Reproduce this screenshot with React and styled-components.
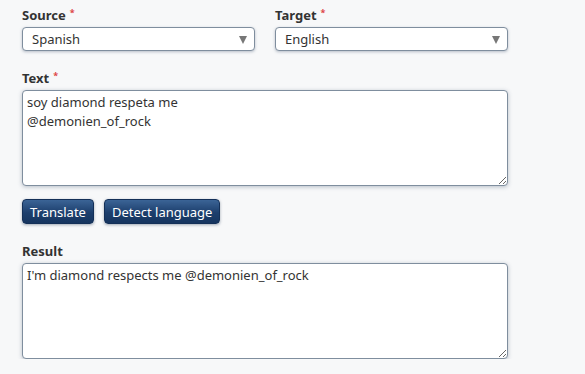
import React, {useState} from "react";
import styled, {createGlobalStyle} from "styled-components";

const Global = createGlobalStyle`
body {
    margin: 0;
    background: #f7f8f9;
    font-family: "Noto Sans", "Open Sans", sans-serif;
}
`;

const Page = styled.div`
width: 486px;
padding: 4px 0 0 22px;
display: flex;
flex-direction: column;
`;

const Row = styled.div`
display: flex;
gap: 20px;
`;

const Field = styled.div`
display: flex;
flex-direction: column;
flex: 1;
margin-bottom: ${p => p.$mb || 0}px;
`;

const Label = styled.label`
font-size: 13px;
font-weight: bold;
color: #333;
height: 23px;
line-height: 23px;
`;

const Star = styled.span`
color: #d44;
font-size: 9px;
vertical-align: top;
position: relative;
top: -3px;
margin-left: 4px;
`;

const Select = styled.div`
position: relative;
height: 22px;
border: 1px solid #7f8e9e;
border-radius: 4px;
background: #fff;
box-shadow: 0 1px 3px rgba(60, 80, 110, 0.35);
font-size: 13px;
color: #333;
line-height: 22px;
padding-left: 9px;
`;

const Arrow = styled.span`
position: absolute;
right: 7px;
top: 8px;
width: 0;
height: 0;
border-left: 4px solid transparent;
border-right: 4px solid transparent;
border-top: 8px solid #777;
`;

const Area = styled.textarea`
box-sizing: border-box;
width: 486px;
height: ${p => p.$h}px;
border: 1px solid #7f8e9e;
border-radius: 4px;
background: #fff;
box-shadow: 0 1px 4px rgba(60, 80, 110, 0.35);
font-family: "Noto Sans", "Open Sans", sans-serif;
font-size: 13px;
line-height: 19px;
color: #333;
padding: 2px 4px;
resize: both;
outline: none;
`;

const Buttons = styled.div`
display: flex;
gap: 10px;
margin: 13px 0 16px;
`;

const Button = styled.button`
height: 25px;
padding: 0 7px;
border: 1px solid #143058;
border-radius: 4px;
background: linear-gradient(#3b6496, #1d3f6d 55%, #16355f);
color: #fff;
font-family: "Noto Sans", "Open Sans", sans-serif;
font-size: 13px;
box-shadow: 0 1px 3px rgba(30, 50, 80, 0.4);
cursor: pointer;
`;

export default function App() {
    const [text, setText] = useState("soy diamond respeta me\n@demonien_of_rock");
    return <Page>
        <Global/>
        <Row>
            <Field $mb={16}>
                <Label>Source<Star>*</Star></Label>
                <Select>Spanish<Arrow/></Select>
            </Field>
            <Field $mb={16}>
                <Label>Target<Star>*</Star></Label>
                <Select>English<Arrow/></Select>
            </Field>
        </Row>
        <Field>
            <Label>Text<Star>*</Star></Label>
            <Area $h={96} value={text} onChange={(e) => setText(e.target.value)}/>
        </Field>
        <Buttons>
            <Button>Translate</Button>
            <Button>Detect language</Button>
        </Buttons>
        <Field>
            <Label>Result</Label>
            <Area $h={96} readOnly value={"I'm diamond respects me @demonien_of_rock"}/>
        </Field>
    </Page>;
}
